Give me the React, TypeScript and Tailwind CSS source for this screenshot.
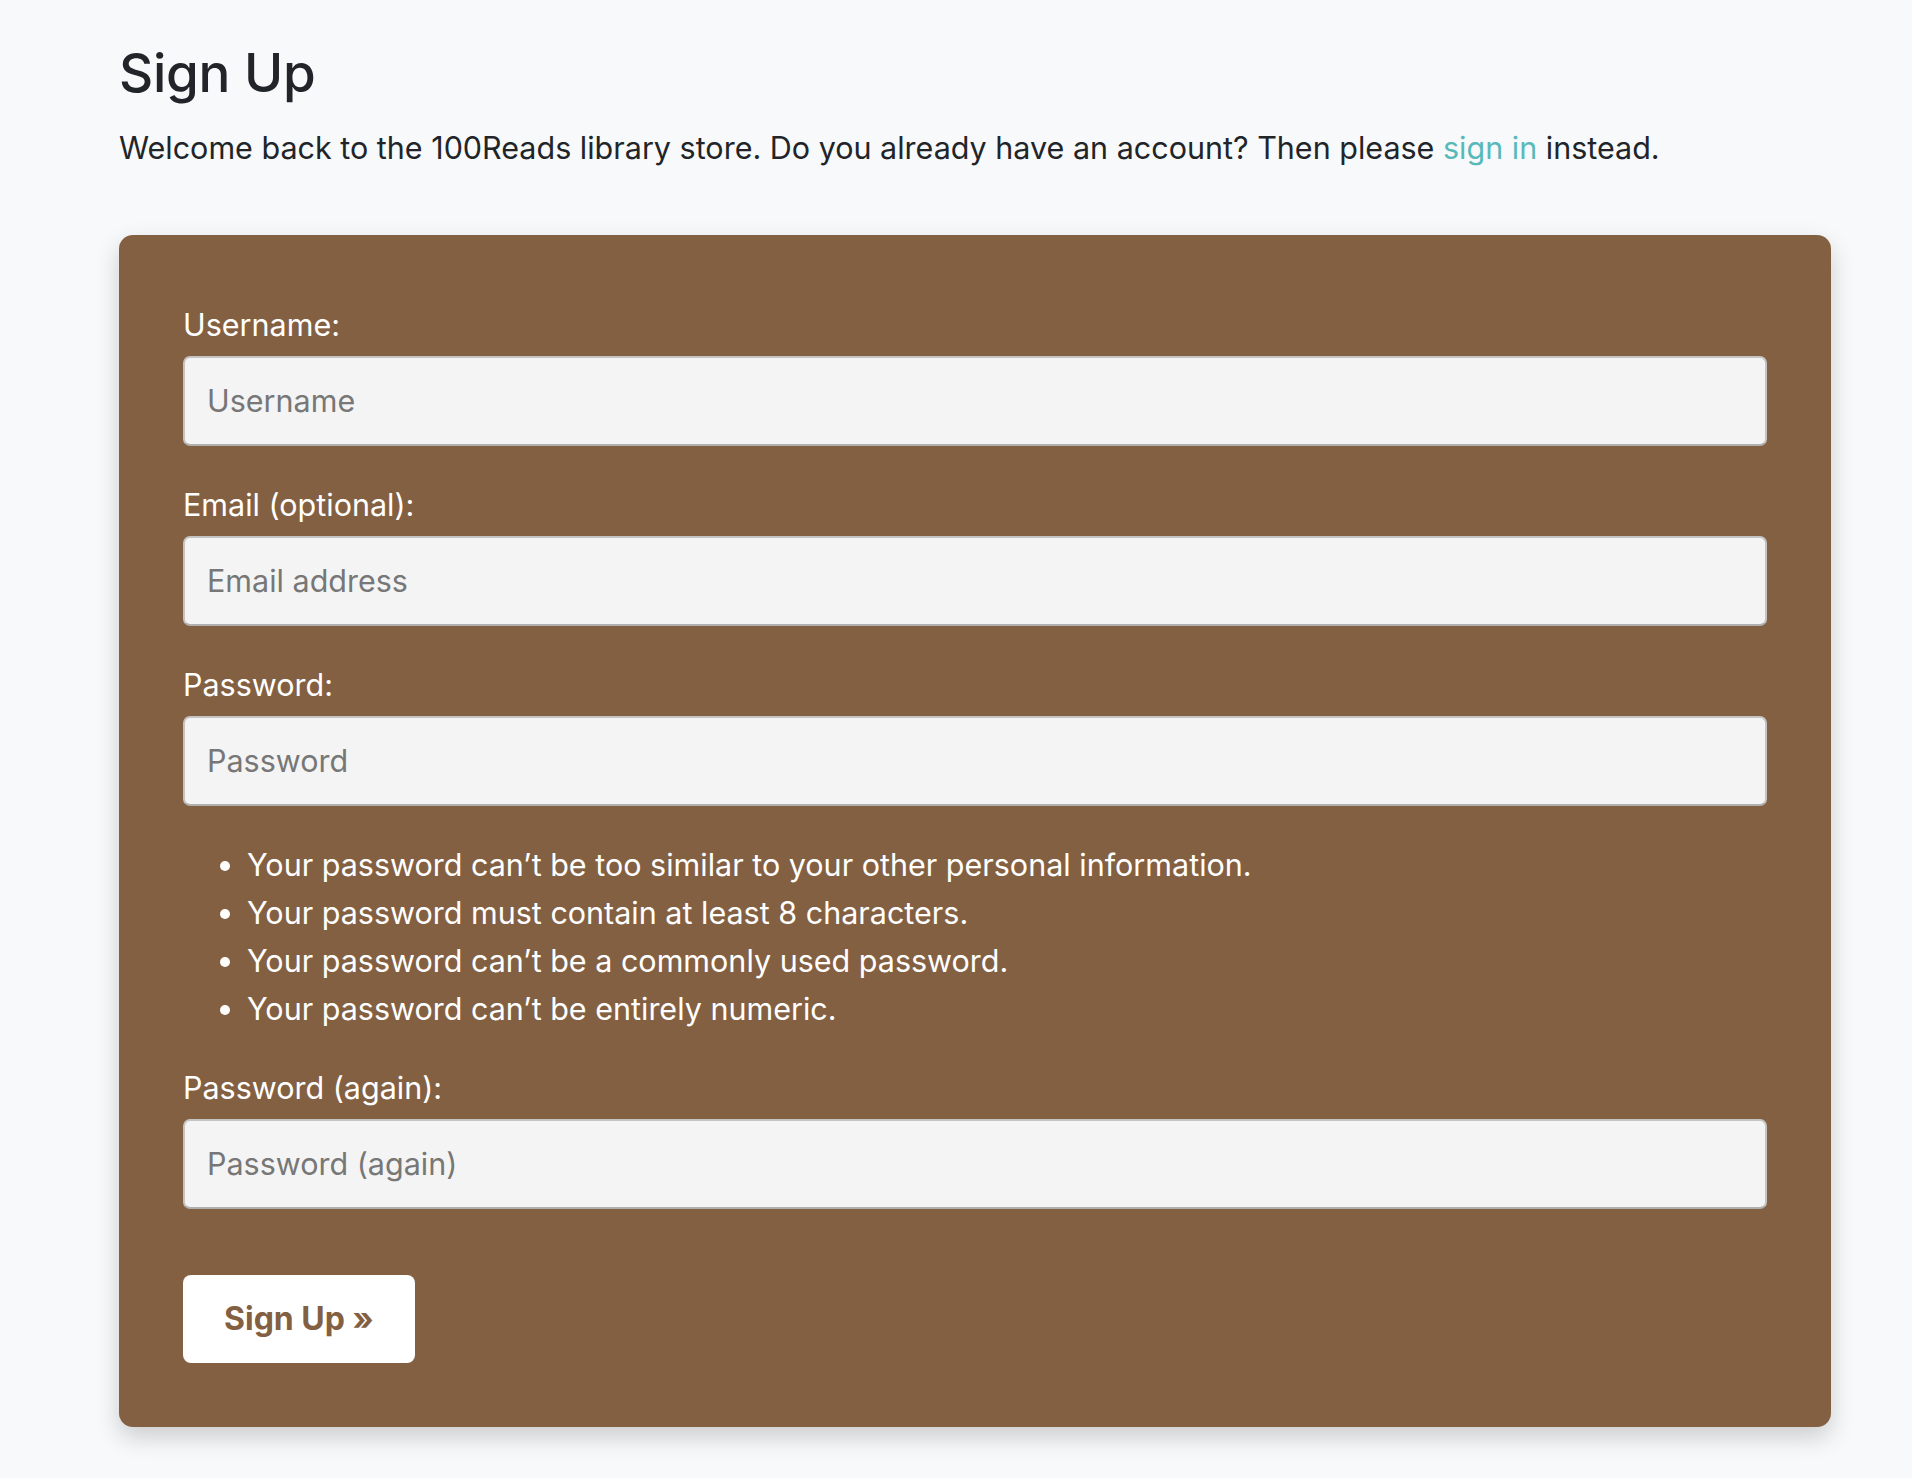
import React from 'react';

const rules = [
  'Your password can’t be too similar to your other personal information.',
  'Your password must contain at least 8 characters.',
  'Your password can’t be a commonly used password.',
  'Your password can’t be entirely numeric.',
];

function Field({ label, placeholder, type = 'text', className = '' }: { label: string; placeholder: string; type?: string; className?: string }) {
  return (
    <div className={className}>
      <label className="block text-white text-[30.5px] leading-[43.5px] mb-[9.5px]">{label}</label>
      <input
        type={type}
        placeholder={placeholder}
        className="block w-full h-[90px] px-[22px] rounded-[7px] bg-[#f4f4f4] border-2 border-[#c4c4c4] border-b-[#b0b0b0] text-[30.5px] text-[#212529] placeholder:text-[#777777] outline-none"
      />
    </div>
  );
}

export default function App() {
  return (
    <div className="min-h-screen bg-[#f8f9fa] font-['Inter',sans-serif] text-[#212529]">
      <div className="pl-[119px] pr-[81px] pt-[40px] pb-[50px]">
        {/* Header */}
        <h1 className="text-[53px] leading-[67px] font-medium tracking-[-0.3px] mb-[19px]">Sign Up</h1>
        <p className="text-[30.5px] leading-[43.5px]">
          Welcome back to the 100Reads library store. Do you already have an account? Then please{' '}
          <a href="#" className="text-[#58b9ba]">sign in</a> instead.
        </p>

        {/* Form card */}
        <form className="mt-[65px] rounded-[14px] bg-[#846042] px-[64px] pt-[68px] pb-[64px] shadow-[0_10px_24px_rgba(0,0,0,0.18)]">
          <Field label="Username:" placeholder="Username" className="mb-[37px]" />
          <Field label="Email (optional):" placeholder="Email address" type="email" className="mb-[37px]" />
          <Field label="Password:" placeholder="Password" type="password" className="mb-[35px]" />

          <ul className="list-disc pl-[64px] text-white text-[30.5px] leading-[48px] mb-[33px]">
            {rules.map((r) => (
              <li key={r}>{r}</li>
            ))}
          </ul>

          <Field label="Password (again):" placeholder="Password (again)" type="password" className="mb-[66px]" />

          <button type="submit" className="h-[88px] px-[41px] rounded-[8px] bg-white text-[#846042] text-[32px] font-bold">
            Sign Up »
          </button>
        </form>
      </div>
    </div>
  );
}
